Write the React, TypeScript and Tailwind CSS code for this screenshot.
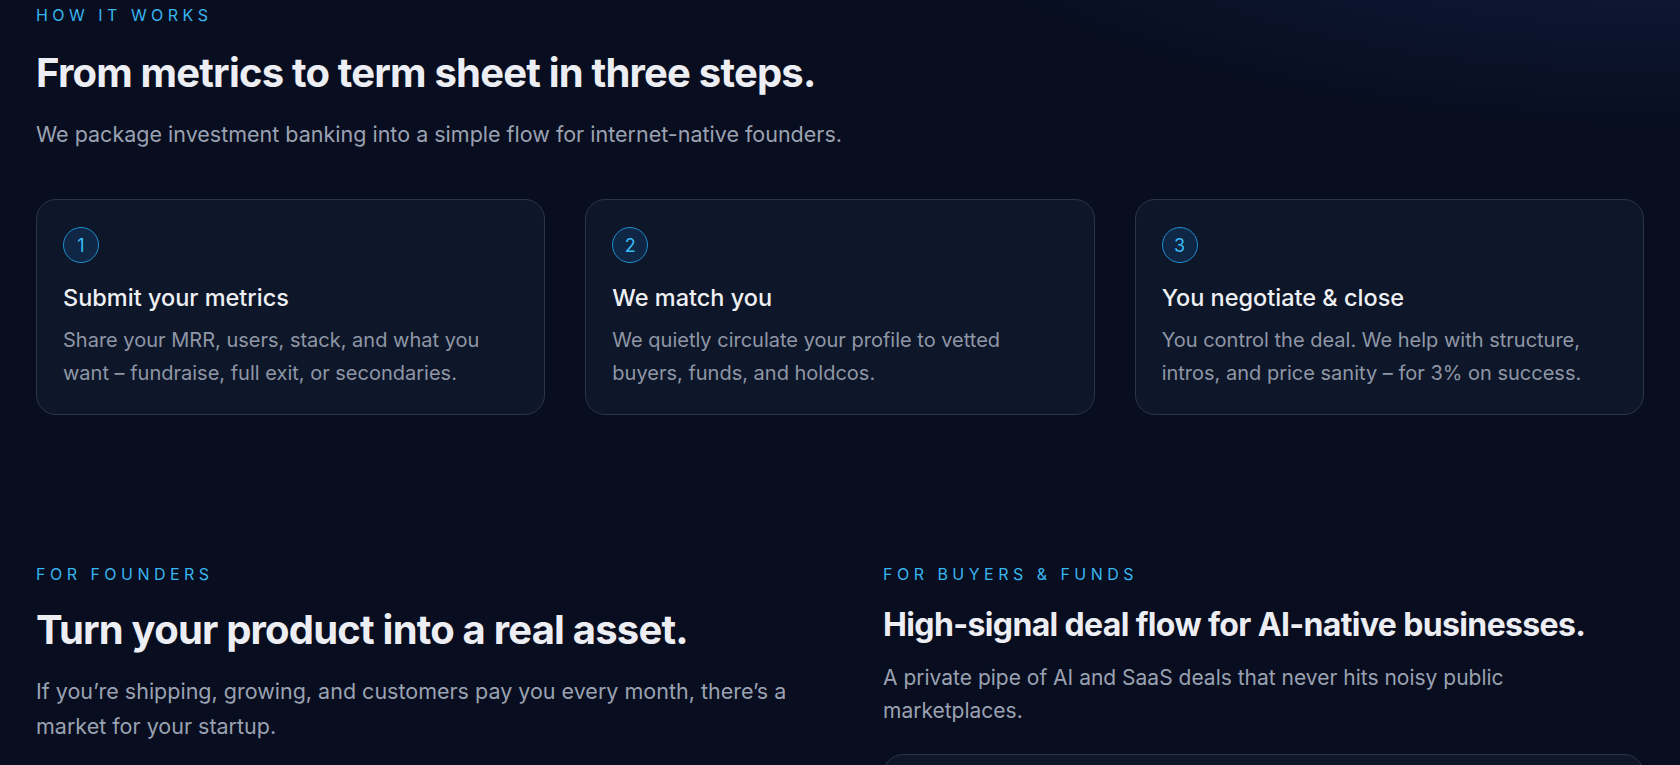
import { ReactNode } from 'react'

const steps = [
  {
    n: 1,
    title: 'Submit your metrics',
    body: 'Share your MRR, users, stack, and what you want – fundraise, full exit, or secondaries.',
  },
  {
    n: 2,
    title: 'We match you',
    body: 'We quietly circulate your profile to vetted buyers, funds, and holdcos.',
  },
  {
    n: 3,
    title: 'You negotiate & close',
    body: 'You control the deal. We help with structure, intros, and price sanity – for 3% on success.',
  },
]

function Eyebrow({ children }: { children: ReactNode }) {
  return (
    <p className="text-[16px] leading-5 tracking-[0.28em] uppercase text-[#38b6f0]">{children}</p>
  )
}

function StepCard({ n, title, body }: { n: number; title: string; body: string }) {
  return (
    <div className="rounded-[20px] border border-[#2b3548] bg-[#0e1629] px-[26px] pt-[27px] pb-[24px]">
      <div className="flex h-9 w-9 items-center justify-center rounded-full border border-[#1f8fcf] bg-[#0f2744] text-[18px] text-[#38bdf8]">
        {n}
      </div>
      <h3 className="mt-[21px] text-[23.5px] font-medium leading-7 text-[#eef0f4]">{title}</h3>
      <p className="mt-3 text-[20px] leading-[33px] text-[#8f97a6]">{body}</p>
    </div>
  )
}

export default function App() {
  return (
    <div className="relative min-h-screen overflow-hidden bg-[#080d1f] font-['Inter','Noto_Sans',sans-serif]">
      {/* soft glow in the top-right corner */}
      <div className="pointer-events-none absolute -top-40 right-0 h-80 w-[900px] bg-[radial-gradient(ellipse_at_top_right,rgba(24,48,100,0.6),rgba(8,13,31,0)_65%)]" />

      <div className="relative px-9 pt-[5px] pb-24">
        {/* How it works */}
        <section>
          <Eyebrow>How it works</Eyebrow>
          <h2 className="mt-6 text-[40px] font-bold leading-[48px] tracking-[-0.02em] text-[#eceef3]">
            From metrics to term sheet in three steps.
          </h2>
          <p className="mt-5 text-[21.5px] leading-[34px] text-[#9aa2b1]">
            We package investment banking into a simple flow for internet-native founders.
          </p>
          <div className="mt-12 grid grid-cols-3 gap-10">
            {steps.map(s => (
              <StepCard key={s.n} {...s} />
            ))}
          </div>
        </section>

        {/* Founders / Buyers */}
        <section className="mt-[149px] grid grid-cols-2 gap-x-[86px]">
          <div>
            <Eyebrow>For founders</Eyebrow>
            <h2 className="mt-[22px] text-[40px] font-bold leading-[48px] tracking-[-0.02em] text-[#eceef3]">
              Turn your product into a real asset.
            </h2>
            <p className="mt-5 text-[21.5px] leading-[35px] text-[#9aa2b1]">
              If you’re shipping, growing, and customers pay you every month, there’s a market for your startup.
            </p>
          </div>
          <div>
            <Eyebrow>For buyers &amp; funds</Eyebrow>
            <h2 className="mt-[22px] text-[32px] font-bold leading-[38px] tracking-[-0.02em] text-[#eceef3]">
              High-signal deal flow for AI-native businesses.
            </h2>
            <p className="mt-[17px] text-[21px] leading-[33px] text-[#9aa2b1]">
              A private pipe of AI and SaaS deals that never hits noisy public marketplaces.
            </p>
            {/* deal panel, only its top edge is in view */}
            <div className="mt-[27px] h-48 rounded-[20px] border border-[#2b3548] bg-[#0e1629]" />
          </div>
        </section>
      </div>
    </div>
  )
}
